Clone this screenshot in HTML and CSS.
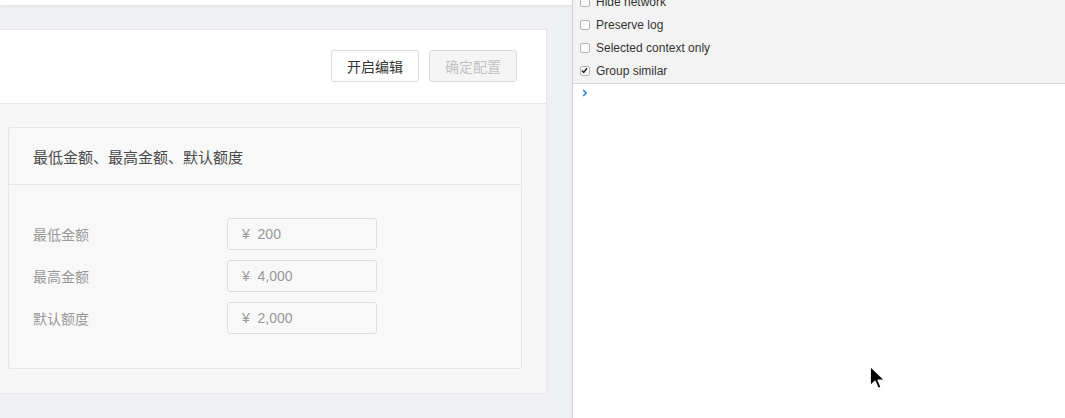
FILE: index.html
```html
<!DOCTYPE html>
<html lang="zh-CN">
<head>
<meta charset="UTF-8">
<title>额度配置</title>
<link rel="stylesheet" href="styles.css">
</head>
<body>

<div class="page">
  <div class="topbar"></div>

  <div class="card">
    <div class="card-head">
      <button class="btn">开启编辑</button>
      <button class="btn" disabled>确定配置</button>
    </div>

    <div class="card-body">
      <div class="panel">
        <div class="panel-title">最低金额、最高金额、默认额度</div>
        <div class="panel-body">
          <div class="row">
            <label>最低金额</label>
            <input class="amount" type="text" value="¥  200" disabled>
          </div>
          <div class="row">
            <label>最高金额</label>
            <input class="amount" type="text" value="¥  4,000" disabled>
          </div>
          <div class="row">
            <label>默认额度</label>
            <input class="amount" type="text" value="¥  2,000" disabled>
          </div>
        </div>
      </div>
    </div>
  </div>
</div>

<!-- devtools console -->
<div class="console">
  <div class="settings">
    <div class="opt"><span class="cb"></span>Hide network</div>
    <div class="opt"><span class="cb"></span>Preserve log</div>
    <div class="opt"><span class="cb"></span>Selected context only</div>
    <div class="opt"><span class="cb checked"><svg viewBox="0 0 9 9" width="9" height="9"><path d="M2 4.6l1.7 1.8L7 2.3" fill="none" stroke="#222" stroke-width="1.5"/></svg></span>Group similar</div>
  </div>
  <div class="prompt">
    <svg viewBox="0 0 6 8" width="6" height="8"><path d="M1.2 1l3 3-3 3" fill="none" stroke="#2d7fe0" stroke-width="1.6"/></svg>
  </div>
</div>

<svg class="cursor" viewBox="0 0 14 22" width="17" height="27">
  <path d="M1 1v16l4-3.8 2.6 6 2.4-1-2.5-5.8H13z" fill="#000" stroke="#fff" stroke-width="1.1" stroke-linejoin="round"/>
</svg>

</body>
</html>
```

FILE: styles.css
```css
body{margin:0;display:flex;height:418px;overflow:hidden;font-family:"Liberation Sans","Noto Sans CJK SC",sans-serif;}

.page{width:572px;flex:none;background:#eef0f3;}
.topbar{height:5px;background:#fff;box-shadow:0 1px 4px rgba(0,0,0,.08);}

.card{margin:24px 25px 0 0;background:#f7f7f7;border:1px solid #e6e6e6;border-left:none;}
.card-head{height:74px;box-sizing:border-box;padding:20px 29px 0 0;display:flex;justify-content:flex-end;gap:10px;background:#fff;border-bottom:1px solid #e6e6e6;}
.btn{width:88px;height:32px;font-family:inherit;font-size:14px;color:#333;background:#fff;border:1px solid #dcdcdc;border-radius:3px;padding:0;}
.btn:disabled{color:#c2c2c2;background:#f5f5f5;}

.card-body{padding:23px 24px 24px 8px;}
.panel{background:#f8f8f8;border:1px solid #e6e6e6;border-radius:2px;}
.panel-title{height:57px;box-sizing:border-box;padding:0 24px;display:flex;align-items:center;font-size:15px;color:#4a4a4a;border-bottom:1px solid #e6e6e6;}
.panel-body{padding:33px 24px 34px;display:flex;flex-direction:column;gap:10px;}
.row{display:flex;align-items:center;height:32px;}
.row label{width:194px;font-size:14px;color:#999;}
.amount{width:150px;height:32px;box-sizing:border-box;padding:0 0 0 14px;font-family:inherit;font-size:14px;color:#999;background:#f8f8f8;border:1px solid #ddd;border-radius:3px;white-space:pre;}

.console{flex:1;border-left:1px solid #cfcfcf;background:#fff;}
.settings{background:#f3f3f3;border-bottom:1px solid #dadada;padding-bottom:1px;margin-top:-10px;}
.opt{height:23px;display:flex;align-items:center;padding-left:7px;font-size:12px;color:#333;}
.cb{width:8px;height:8px;margin-right:6px;border:1px solid #b4b4b4;border-radius:2px;background:#fafafa;display:flex;}
.cb svg{margin:-1px 0 0 -1px;}
.prompt{padding:5px 0 0 9px;line-height:0;}

.cursor{position:absolute;left:869px;top:365px;}
```
